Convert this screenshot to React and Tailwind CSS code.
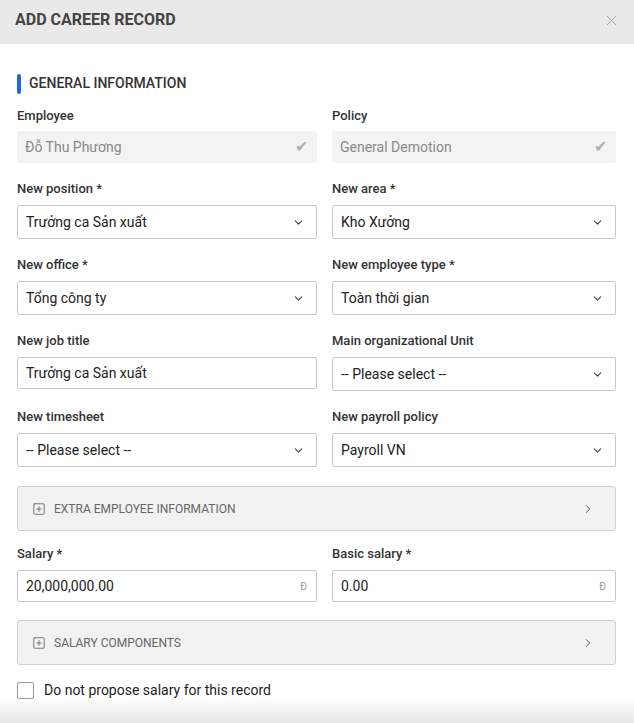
import { ChevronDown, ChevronRight, X, SquarePlus } from 'lucide-react'

function Label({ children }) {
  return <div className="text-[13px] leading-[17px] font-medium text-[#333] mb-[8px]">{children}</div>
}

function ReadOnly({ label, value }) {
  return (
    <div>
      <div className="text-[13px] leading-[17px] font-medium text-[#333] mb-[7px]">{label}</div>
      <div className="h-[32px] rounded-[3px] bg-[#f3f3f3] flex items-center justify-between pl-[8px] pr-[9px]">
        <span className="text-[14px] text-[#8a8a8a]">{value}</span>
        <span className="text-[16px] text-[#b0b0b0] leading-none">✔</span>
      </div>
    </div>
  )
}

function Select({ label, value }) {
  return (
    <div>
      <Label>{label}</Label>
      <div className="h-[34px] rounded-[2px] border border-[#c8c8c8] bg-white flex items-center justify-between pl-[8px] pr-[11px]">
        <span className="text-[14px] text-[#222]">{value}</span>
        <ChevronDown size={13} strokeWidth={2} className="text-[#444]" />
      </div>
    </div>
  )
}

function Input({ label, value, suffix }) {
  return (
    <div>
      <Label>{label}</Label>
      <div className="h-[32px] rounded-[2px] border border-[#c8c8c8] bg-white flex items-center justify-between pl-[8px] pr-[9px]">
        <span className="text-[14px] text-[#222]">{value}</span>
        {suffix && <span className="text-[10px] text-[#999]">{suffix}</span>}
      </div>
    </div>
  )
}

function Section({ title }) {
  return (
    <div className="h-[45px] rounded-[3px] border border-[#cfcfcf] bg-[#f2f2f2] flex items-center justify-between pl-[14px] pr-[20px]">
      <div className="flex items-center gap-[8px]">
        <SquarePlus size={14} strokeWidth={1.3} className="text-[#555]" />
        <span className="text-[12px] font-normal text-[#666] uppercase">{title}</span>
      </div>
      <ChevronRight size={14} strokeWidth={1.6} className="text-[#555]" />
    </div>
  )
}

export default function App() {
  return (
    <div className="w-[634px] h-[723px] bg-white overflow-hidden relative" style={{ fontFamily: 'Roboto, "Noto Sans", sans-serif' }}>
      <div className="h-[44px] bg-[#e9e9e9] flex items-center justify-between pl-[15px] pr-[14px]">
        <h1 className="text-[16px] font-bold text-[#444] mt-[-4px]">ADD CAREER RECORD</h1>
        <X size={17} strokeWidth={1.2} className="text-[#999] mt-[-4px]" />
      </div>

      <div className="pl-[17px] pr-[18px] pt-[29px]">
        <div className="flex items-center gap-[8px] h-[21px]">
          <div className="w-[4px] h-[20px] rounded-full bg-[#1f6bd6]" />
          <span className="text-[14px] font-medium text-[#333]">GENERAL INFORMATION</span>
        </div>

        <div className="grid grid-cols-[300px_284px] gap-x-[15px] gap-y-[17px] mt-[13px]">
          <ReadOnly label="Employee" value="Đỗ Thu Phương" />
          <ReadOnly label="Policy" value="General Demotion" />
          <Select label="New position *" value="Trưởng ca Sản xuất" />
          <Select label="New area *" value="Kho Xưởng" />
          <Select label="New office *" value="Tổng công ty" />
          <Select label="New employee type *" value="Toàn thời gian" />
          <Input label="New job title" value="Trưởng ca Sản xuất" />
          <Select label="Main organizational Unit" value="-- Please select --" />
          <Select label="New timesheet" value="-- Please select --" />
          <Select label="New payroll policy" value="Payroll VN" />
        </div>

        <div className="mt-[19px]">
          <Section title="Extra employee information" />
        </div>

        <div className="grid grid-cols-[300px_284px] gap-x-[15px] mt-[14px]">
          <Input label="Salary *" value="20,000,000.00" suffix="Đ" />
          <Input label="Basic salary *" value="0.00" suffix="Đ" />
        </div>

        <div className="mt-[18px]">
          <Section title="Salary components" />
        </div>

        <div className="flex items-center gap-[10px] mt-[15px]">
          <div className="w-[17px] h-[17px] rounded-[2px] border border-[#999] bg-white" />
          <span className="text-[14px] text-[#222]">Do not propose salary for this record</span>
        </div>
      </div>

      <div className="absolute left-0 right-0 bottom-0 h-[26px] bg-gradient-to-b from-white/0 to-[#e6e6e6]" />
    </div>
  )
}
